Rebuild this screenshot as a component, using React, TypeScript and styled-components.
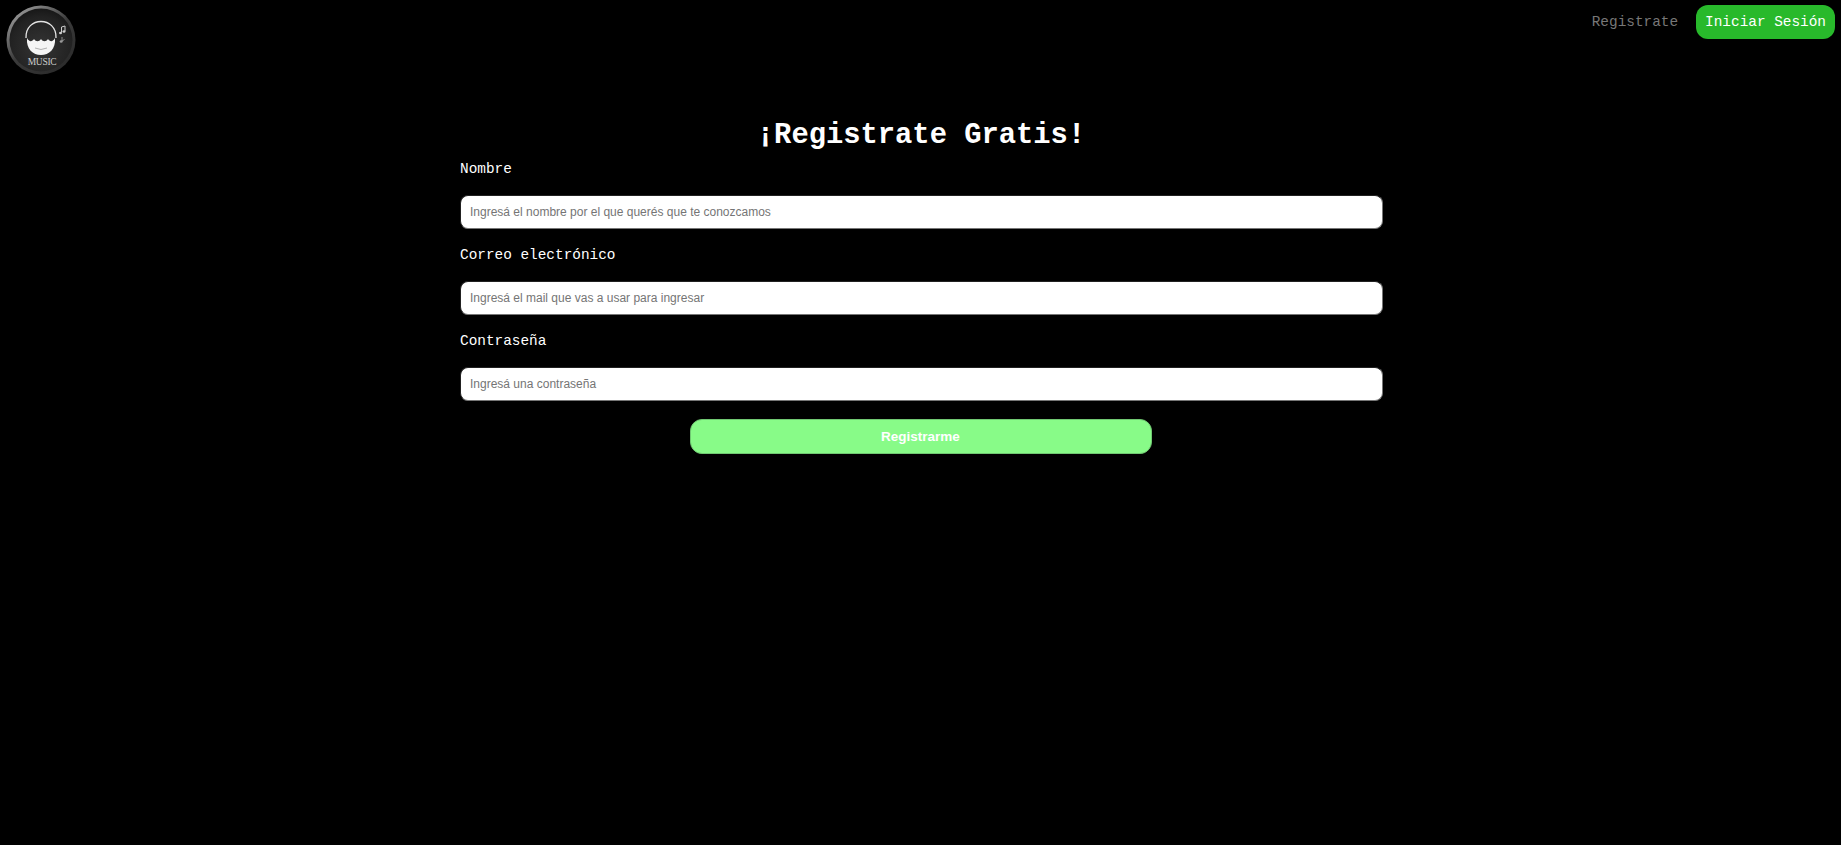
import React from 'react';
import styled, { createGlobalStyle } from 'styled-components';

const GlobalStyle = createGlobalStyle`
  html, body {
    margin: 0;
    padding: 0;
    background: #000;
    min-height: 100vh;
  }
`;

const Page = styled.div`
  display: flex;
  flex-direction: column;
  height: 845px;
  overflow: hidden;
  background: #000;
  font-family: 'Liberation Mono', monospace;
`;

const Header = styled.header`
  display: flex;
  justify-content: space-between;
  align-items: flex-start;
  height: 74px;
  padding: 5px 6px 0 6px;
`;

const Nav = styled.nav`
  display: flex;
  align-items: center;
  gap: 18px;
`;

const NavLink = styled.a`
  color: #777;
  font-size: 14.4px;
  line-height: 34px;
`;

const LoginButton = styled.a`
  background: #28b92b;
  color: #fff;
  font-size: 14.4px;
  line-height: 34px;
  padding: 0 9px;
  border-radius: 12px;
`;

const Form = styled.form`
  display: flex;
  flex-direction: column;
  width: 925px;
  margin: 0 auto;
  padding-top: 40px;
`;

const Title = styled.h1`
  margin: 0;
  padding-left: 1px;
  color: #fff;
  font-size: 28.8px;
  line-height: 33px;
  font-weight: 700;
  text-align: center;
`;

const Field = styled.div`
  display: flex;
  flex-direction: column;
`;

const Label = styled.label`
  color: #fff;
  font-size: 14.4px;
  line-height: 17px;
  margin: 9px 0 17px;
  padding-left: 2px;
`;

const Input = styled.input`
  box-sizing: border-box;
  width: 923px;
  height: 34px;
  margin: 0 0 9px 2px;
  padding: 0 8px 0 9px;
  border: 1px inset #767676;
  border-radius: 8px;
  background: #fff;
  font-family: 'Liberation Sans', Arial, sans-serif;
  font-size: 12px;
  outline: none;

  &::placeholder {
    color: #757575;
    opacity: 1;
  }
`;

const Submit = styled.button`
  align-self: center;
  width: 462px;
  height: 35px;
  margin-top: 9px;
  border: 1px solid #70c872;
  border-radius: 12px;
  background: #88fb88;
  color: #fff;
  font-family: 'Liberation Sans', Arial, sans-serif;
  font-size: 13.5px;
  font-weight: 700;
`;

function Logo() {
  return (
    <svg width="70" height="70" viewBox="0 0 70 70" aria-hidden="true">
      <defs>
        <linearGradient id="rim" x1="0.15" y1="0.05" x2="0.85" y2="0.95">
          <stop offset="0" stopColor="#9a9a9a" />
          <stop offset="0.5" stopColor="#3a3a3a" />
          <stop offset="1" stopColor="#2a2a2a" />
        </linearGradient>
        <radialGradient id="disc" cx="0.5" cy="0.62" r="0.65">
          <stop offset="0" stopColor="#343434" />
          <stop offset="0.75" stopColor="#222" />
          <stop offset="1" stopColor="#151515" />
        </radialGradient>
      </defs>
      <circle cx="35" cy="35" r="34.5" fill="url(#rim)" />
      <circle cx="35" cy="35" r="31.5" fill="url(#disc)" />
      <path d="M20 33 C19 11 51 11 50 33" fill="none" stroke="#e4e4e4" strokeWidth="1.3" />
      <path d="M21 33 C23 37 26 37 28 34 C30 37 33 37 35 34 C37 37 40 37 42 34 C44 37 47 37 49 33 C50 44 43 50 35 50 C27 50 20 44 21 33 Z" fill="#f5f5f5" />
      <path d="M29 43 Q35 46 41 43" fill="none" stroke="#a0a0a0" strokeWidth="0.8" />
      <path d="M55.5 22 V27.5 M55.5 22 L59 21 V26" fill="none" stroke="#ccc" strokeWidth="1" />
      <ellipse cx="54.5" cy="28" rx="1.5" ry="1.2" fill="#ccc" />
      <ellipse cx="58" cy="26.5" rx="1.5" ry="1.2" fill="#ccc" />
      <path d="M56 32 V36 L58.5 34.5" fill="none" stroke="#999" strokeWidth="0.9" />
      <ellipse cx="55.2" cy="36.5" rx="1.5" ry="1.2" fill="#999" />
      <text x="36" y="59.5" textAnchor="middle" fill="#ccc" fontSize="9.5" letterSpacing="-0.3" fontFamily="'Liberation Serif', serif">MUSIC</text>
    </svg>
  );
}

export default function App() {
  return (
    <Page>
      <GlobalStyle />
      <Header>
        <Logo />
        <Nav>
          <NavLink>Registrate</NavLink>
          <LoginButton>Iniciar Sesión</LoginButton>
        </Nav>
      </Header>
      <Form>
        <Title>¡Registrate Gratis!</Title>
        <Field>
          <Label>Nombre</Label>
          <Input placeholder="Ingresá el nombre por el que querés que te conozcamos" />
        </Field>
        <Field>
          <Label>Correo electrónico</Label>
          <Input placeholder="Ingresá el mail que vas a usar para ingresar" />
        </Field>
        <Field>
          <Label>Contraseña</Label>
          <Input placeholder="Ingresá una contraseña" />
        </Field>
        <Submit type="button">Registrarme</Submit>
      </Form>
    </Page>
  );
}
